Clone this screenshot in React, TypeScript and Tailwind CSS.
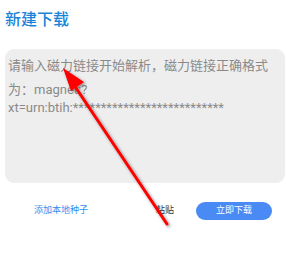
export default function App() {
  return (
    <div
      className="relative w-[286px] h-[274px] bg-white overflow-hidden"
      style={{ fontFamily: "Roboto, 'Noto Sans CJK SC', sans-serif" }}
    >
      <div className="pl-[5px] pt-[10px]">
        <h1 className="text-[16px] leading-[20px] text-[#1a84d8] font-medium">新建下载</h1>
      </div>

      <div className="ml-[5px] mt-[19px] w-[280px] h-[134px] rounded-[9px] bg-[#eeeeee] px-[3px] pt-[8px] text-[13px] text-[#8a8a8a]">
        <p className="leading-[18px] whitespace-nowrap">请输入磁力链接开始解析，磁力链接正确格式</p>
        <p className="leading-[18px] mt-[6px]">为：magnet:?</p>
        <p className="leading-[18px] whitespace-nowrap">xt=urn:btih:***************************</p>
      </div>

      <div className="flex items-center mt-[19px] h-[18px] whitespace-nowrap">
        <span className="shrink-0 ml-[34px] text-[9px] text-[#2f8ff0]">添加本地种子</span>
        <span className="shrink-0 ml-[68px] text-[9px] text-[#333]">粘贴</span>
        <button className="shrink-0 ml-[22px] w-[76px] h-[18px] rounded-full bg-[#4a8af4] text-[9px] text-white flex items-center justify-center">
          立即下载
        </button>
      </div>

      <svg className="absolute left-0 top-0 pointer-events-none" width="286" height="274">
        <defs>
          <filter id="sh" x="-20%" y="-20%" width="140%" height="140%">
            <feDropShadow dx="1.5" dy="1.5" stdDeviation="1.5" floodColor="#000" floodOpacity="0.45" />
          </filter>
        </defs>
        <g filter="url(#sh)">
          <line x1="167" y1="224" x2="70" y2="79" stroke="#ff0000" strokeWidth="3" strokeLinecap="round" />
          <polygon points="63,68 84,82 71,91" fill="#ff0000" />
        </g>
      </svg>
    </div>
  );
}
